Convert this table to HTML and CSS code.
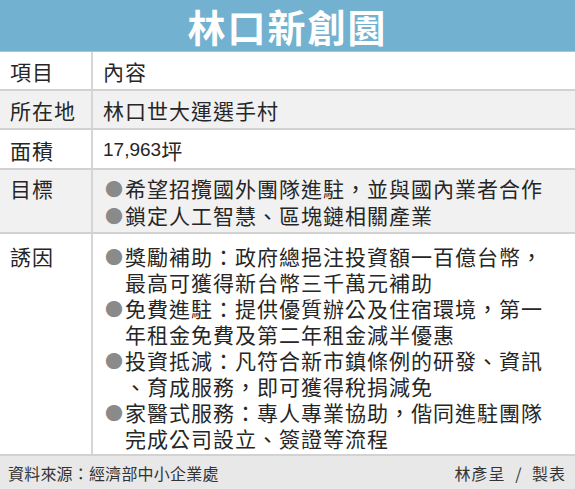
FILE: index.html
```html
<!DOCTYPE html>
<html lang="zh-Hant">
<head>
<meta charset="utf-8">
<title>林口新創園</title>
<link rel="stylesheet" href="styles.css">
</head>
<body>
<div class="card">
  <header class="title"><span>林口新創園</span></header>
  <div class="row">
    <div class="label">項目</div>
    <div class="value">內容</div>
  </div>
  <div class="row shade">
    <div class="label">所在地</div>
    <div class="value">林口世大運選手村</div>
  </div>
  <div class="row tall">
    <div class="label">面積</div>
    <div class="value"><span class="num">17,963</span>坪</div>
  </div>
  <div class="row shade multi goals">
    <div class="label">目標</div>
    <ul class="value list">
      <li><span class="dot">●</span>希望招攬國外團隊進駐，並與國內業者合作</li>
      <li><span class="dot">●</span>鎖定人工智慧、區塊鏈相關產業</li>
    </ul>
  </div>
  <div class="row multi incent">
    <div class="label">誘因</div>
    <ul class="value list">
      <li><span class="dot">●</span>獎勵補助：政府總挹注投資額一百億台幣，<br>最高可獲得新台幣三千萬元補助</li>
      <li><span class="dot">●</span>免費進駐：提供優質辦公及住宿環境，第一<br>年租金免費及第二年租金減半優惠</li>
      <li><span class="dot">●</span>投資抵減：凡符合新市鎮條例的研發、資訊<br>、育成服務，即可獲得稅捐減免</li>
      <li><span class="dot">●</span>家醫式服務：專人專業協助，偕同進駐團隊<br>完成公司設立、簽證等流程</li>
    </ul>
  </div>
  <footer class="foot">
    <span>資料來源：經濟部中小企業處</span>
    <span class="maker">林彥呈 / 製表</span>
  </footer>
</div>
</body>
</html>
```

FILE: styles.css
```css
html, body {
  margin: 0;
  padding: 0;
  background: #ffffff;
}

.card {
  width: 575px;
  height: 489px;
  overflow: hidden;
  font-family: "Noto Sans CJK TC", "Noto Sans", sans-serif;
  color: #262626;
  display: flex;
  flex-direction: column;
}

.title {
  flex: none;
  height: 51px;
  border-bottom: 1px solid #9ccbe0;
  background: #72b1cf;
  color: #ffffff;
  display: flex;
  justify-content: center;
  align-items: center;
  font-size: 38px;
  font-weight: 700;
  line-height: 1;
  letter-spacing: 2px;
}

.row {
  flex: none;
  display: grid;
  grid-template-columns: 93px 1fr;
  border-bottom: 2px solid #d2d2d2;
  font-size: 21px;
  letter-spacing: 1px;
  line-height: 26px;
}

.row.shade {
  background: #f1f1f1;
}

.label {
  height: 26px;
  border-right: 2px solid #d6d6d6;
  padding: 6px 0 5px 10px;
}

.multi .label {
  height: auto;
}

.value {
  height: 26px;
  padding: 6px 0 5px 10px;
  white-space: nowrap;
}

.row.tall .label,
.row.tall .value {
  padding-top: 7px;
}

.num {
  font-family: "Liberation Sans", sans-serif;
  font-size: 19px;
  letter-spacing: 0;
  line-height: 26px;
  vertical-align: top;
}

.list {
  height: auto;
  margin: 0;
  list-style: none;
}

.goals .label,
.goals .list {
  padding-top: 5px;
  padding-bottom: 4px;
}

.goals .list li + li {
  margin-top: 1px;
}

.incent .label,
.incent .list {
  padding-top: 9px;
  padding-bottom: 3px;
}

.list li {
  height: 52px;
  padding-left: 22px;
  text-indent: -22px;
}

.goals .list li {
  height: 26px;
}

.dot {
  color: #8a8a8a;
  font-size: 18px;
  display: inline-block;
  width: 20px;
  height: 26px;
  padding-left: 2px;
  line-height: 26px;
  vertical-align: top;
  text-indent: 0;
  letter-spacing: 0;
}

.foot {
  flex: 1;
  background: #e8e8e8;
  display: flex;
  justify-content: space-between;
  align-items: center;
  padding: 0 9px 0 8px;
  font-size: 16px;
  color: #333333;
  letter-spacing: 0.2px;
}

.maker {
  word-spacing: 5px;
  letter-spacing: 1px;
}
```
